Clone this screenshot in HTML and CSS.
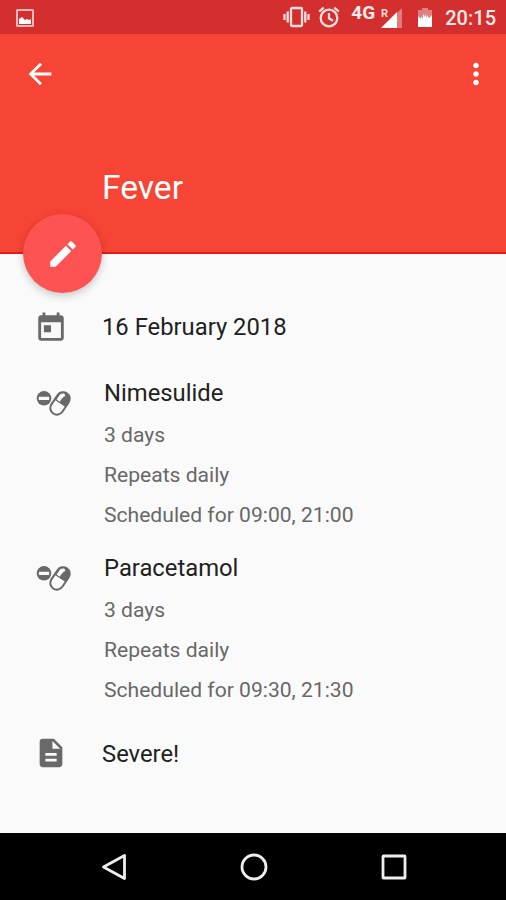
FILE: index.html
```
<!DOCTYPE html>
<html lang="en">
<head>
    <meta charset="UTF-8">
    <meta name="viewport" content="width=device-width, initial-scale=1.0">
    <title>Fever</title>
    <link rel="stylesheet" href="styles.css">
</head>
<body>

    <!-- Shared pill icon -->
    <svg class="defs" width="0" height="0">
        <symbol id="pills" viewBox="0 0 36 28">
            <circle cx="8" cy="9.3" r="7.3" fill="#696969"/>
            <rect x="2.8" y="7.8" width="10.4" height="3.2" rx=".6" fill="#fafafa"/>
            <g transform="translate(24 14.4) rotate(34)">
                <rect x="-6.6" y="-12.2" width="13.2" height="24.4" rx="6.6" fill="#fafafa" stroke="#696969" stroke-width="2"/>
                <path d="M-6.6 0v-5.6a6.6 6.6 0 0 1 13.2 0v5.6z" fill="#696969"/>
                <path d="M-5-1.3v-4.4c0-2.6 1.3-4.2 3.6-4.7l1.6 1.2c-1.4 1.8-1.6 4-1.3 7.9z" fill="#fafafa"/>
            </g>
        </symbol>
    </svg>

    <!-- Status Bar -->
    <div class="status-bar">
        <svg class="shot" width="18" height="18" viewBox="0 0 18 18">
            <rect x="1" y="1" width="16" height="16" rx=".5" fill="none" stroke="#f6b9b9" stroke-width="2"/>
            <path d="M3 15V10l3-2 3 3 2-1 2 1 2-1v5z" fill="#fff"/>
        </svg>
        <div class="status-right">
            <svg class="vibrate" width="27" height="22" viewBox="0 0 27 22" fill="none" stroke="#fbdede" stroke-width="2.3">
                <rect x="8" y="2" width="11" height="18" rx="1"/>
                <path d="M4.7 5.5v11M1.5 8v6M22.3 5.5v11M25.5 8v6"/>
            </svg>
            <svg class="alarm" width="22" height="22" viewBox="0 0 22 22" fill="none" stroke="#fbdede" stroke-width="2.3">
                <circle cx="11" cy="12" r="8.3"/>
                <path d="M11 7v5.3l4 2.4M1.2 5.6l4.5-4M20.8 5.6l-4.5-4"/>
            </svg>
            <span class="network">4G</span>
            <svg class="signal" width="22" height="22" viewBox="0 0 22 22">
                <path d="M21 1v20h-6V7z" fill="#e47a7a"/>
                <path d="M0 21L16 5v16z" fill="#fff"/>
                <text x="0" y="10" class="roaming">R</text>
            </svg>
            <svg class="battery" width="16" height="21" viewBox="0 0 16 21">
                <path d="M5 1h6v2h4v17H1V3h4z" fill="#e18080"/>
                <path d="M1 9l3 3V9l2 3V7l2 3V7l2 4V8l2 3 3-3v12H1z" fill="#fff"/>
            </svg>
            <span class="clock">20:15</span>
        </div>
    </div>

    <!-- Header -->
    <header class="header">
        <div class="toolbar">
            <svg class="icon" viewBox="0 0 24 24" fill="#fff"><path d="M20 11H7.83l5.59-5.59L12 4l-8 8 8 8 1.41-1.41L7.83 13H20v-2z"/></svg>
            <svg class="icon" viewBox="0 0 24 24" fill="#fff"><path d="M12 8c1.1 0 2-.9 2-2s-.9-2-2-2-2 .9-2 2 .9 2 2 2zm0 2c-1.1 0-2 .9-2 2s.9 2 2 2 2-.9 2-2-.9-2-2-2zm0 6c-1.1 0-2 .9-2 2s.9 2 2 2 2-.9 2-2-.9-2-2-2z"/></svg>
        </div>
        <h1>Fever</h1>
        <button class="fab" aria-label="Edit">
            <svg class="icon" viewBox="0 0 24 24" fill="#fff"><path d="M3 17.25V21h3.75L17.81 9.94l-3.75-3.75L3 17.25zM20.71 7.04c.39-.39.39-1.02 0-1.41l-2.34-2.34c-.39-.39-1.02-.39-1.41 0l-1.83 1.83 3.75 3.75 1.83-1.83z"/></svg>
        </button>
    </header>

    <!-- Details -->
    <main class="details">
        <div class="row date">
            <svg class="icon" viewBox="0 0 24 24" fill="#696969"><path d="M19 3h-1V1h-2v2H8V1H6v2H5c-1.11 0-1.99.9-1.99 2L3 19c0 1.1.89 2 2 2h14c1.1 0 2-.9 2-2V5c0-1.1-.9-2-2-2zm0 16H5V8h14v11zM7 10h5v5H7z"/></svg>
            <p class="main-text">16 February 2018</p>
        </div>

        <div class="row medicine">
            <svg class="pills"><use href="#pills"/></svg>
            <div>
                <p class="main-text">Nimesulide</p>
                <p class="sub-text">3 days</p>
                <p class="sub-text">Repeats daily</p>
                <p class="sub-text">Scheduled for 09:00, 21:00</p>
            </div>
        </div>

        <div class="row medicine">
            <svg class="pills"><use href="#pills"/></svg>
            <div>
                <p class="main-text">Paracetamol</p>
                <p class="sub-text">3 days</p>
                <p class="sub-text">Repeats daily</p>
                <p class="sub-text">Scheduled for 09:30, 21:30</p>
            </div>
        </div>

        <div class="row note">
            <svg class="icon" viewBox="0 0 24 24" fill="#696969"><path d="M14 2H6c-1.1 0-1.99.9-1.99 2L4 20c0 1.1.89 2 1.99 2H18c1.1 0 2-.9 2-2V8l-6-6zm2 16H8v-2h8v2zm0-4H8v-2h8v2zm-3-5V3.5L18.5 9H13z"/></svg>
            <p class="main-text">Severe!</p>
        </div>
    </main>

    <!-- Navigation Bar -->
    <nav class="nav-bar">
        <svg width="28" height="28" viewBox="0 0 28 28"><path d="M24.5 2.5v23L3.5 14z"/></svg>
        <svg width="28" height="28" viewBox="0 0 28 28"><circle cx="14" cy="14" r="12"/></svg>
        <svg width="28" height="28" viewBox="0 0 28 28"><rect x="3" y="3" width="22" height="22" rx=".5"/></svg>
    </nav>

</body>
</html>
```

FILE: styles.css
```
/* Global Styling */
* {
    margin: 0;
    padding: 0;
    box-sizing: border-box;
    font-family: Roboto, sans-serif;
}

body {
    display: flex;
    flex-direction: column;
    height: 900px;
    background: #fafafa;
    overflow: hidden;
}

svg {
    display: block;
    flex: none;
}

.defs {
    position: absolute;
}

.icon {
    width: 34px;
    height: 34px;
}

/* Status Bar */
.status-bar {
    display: flex;
    justify-content: space-between;
    height: 34px;
    padding: 0 10px 0 16px;
    background: #d32f2f;
    color: #fdeaea;
}

.shot {
    margin-top: 9px;
}

.status-right {
    display: flex;
}

.vibrate {
    margin: 6px 8px 0 0;
}

.alarm {
    margin: 6px 11px 0 0;
}

.network {
    width: 25px;
    margin: 3px 5px 0 0;
    font-size: 19px;
    font-weight: 700;
    line-height: 20px;
}

.signal {
    margin: 7px 14px 0 0;
}

.roaming {
    font-size: 11px;
    font-weight: 700;
    fill: #fbdede;
}

.battery {
    margin: 7px 12px 0 0;
}

.clock {
    font-size: 20px;
    font-weight: 500;
    line-height: 37px;
}

/* Header */
.header {
    position: relative;
    height: 220px;
    background: #f64435;
    border-bottom: 2px solid #e51c16;
}

.toolbar {
    display: flex;
    justify-content: space-between;
    padding: 23px 13px 0 23px;
}

h1 {
    margin: 77px 0 0 102px;
    color: #fff;
    font-size: 33.6px;
    font-weight: 400;
    line-height: 40px;
}

/* Floating edit button */
.fab {
    position: absolute;
    left: 23px;
    bottom: -41px;
    display: flex;
    justify-content: center;
    align-items: center;
    width: 79px;
    height: 79px;
    border: none;
    border-radius: 50%;
    background: #ff5252;
    box-shadow: 0 3px 8px rgba(0, 0, 0, 0.2);
}

/* Details */
.details {
    flex: 1;
    padding: 56px 0 0 34px;
}

.row {
    display: flex;
}

.row .icon {
    margin-right: 34px;
}

.main-text {
    color: #212121;
    font-size: 23.8px;
    line-height: 34px;
}

.date {
    height: 34px;
    margin-bottom: 32px;
}

.date .icon {
    margin-top: 1px;
}

.medicine {
    height: 175px;
}

.pills {
    width: 36px;
    height: 28px;
    margin: 13px 32px 0 2px;
}

.sub-text {
    color: #686868;
    font-size: 21.1px;
    line-height: 40px;
}

.medicine .main-text {
    margin-bottom: 5px;
}

.note {
    margin-top: 10px;
}

.note .main-text {
    margin-top: 1px;
}

/* Navigation Bar */
.nav-bar {
    display: flex;
    justify-content: center;
    gap: 112px;
    height: 67px;
    padding: 20px 0 0 1px;
    background: #000;
}

.nav-bar svg {
    fill: none;
    stroke: #eee;
    stroke-width: 2.8;
    stroke-linejoin: round;
}
```
